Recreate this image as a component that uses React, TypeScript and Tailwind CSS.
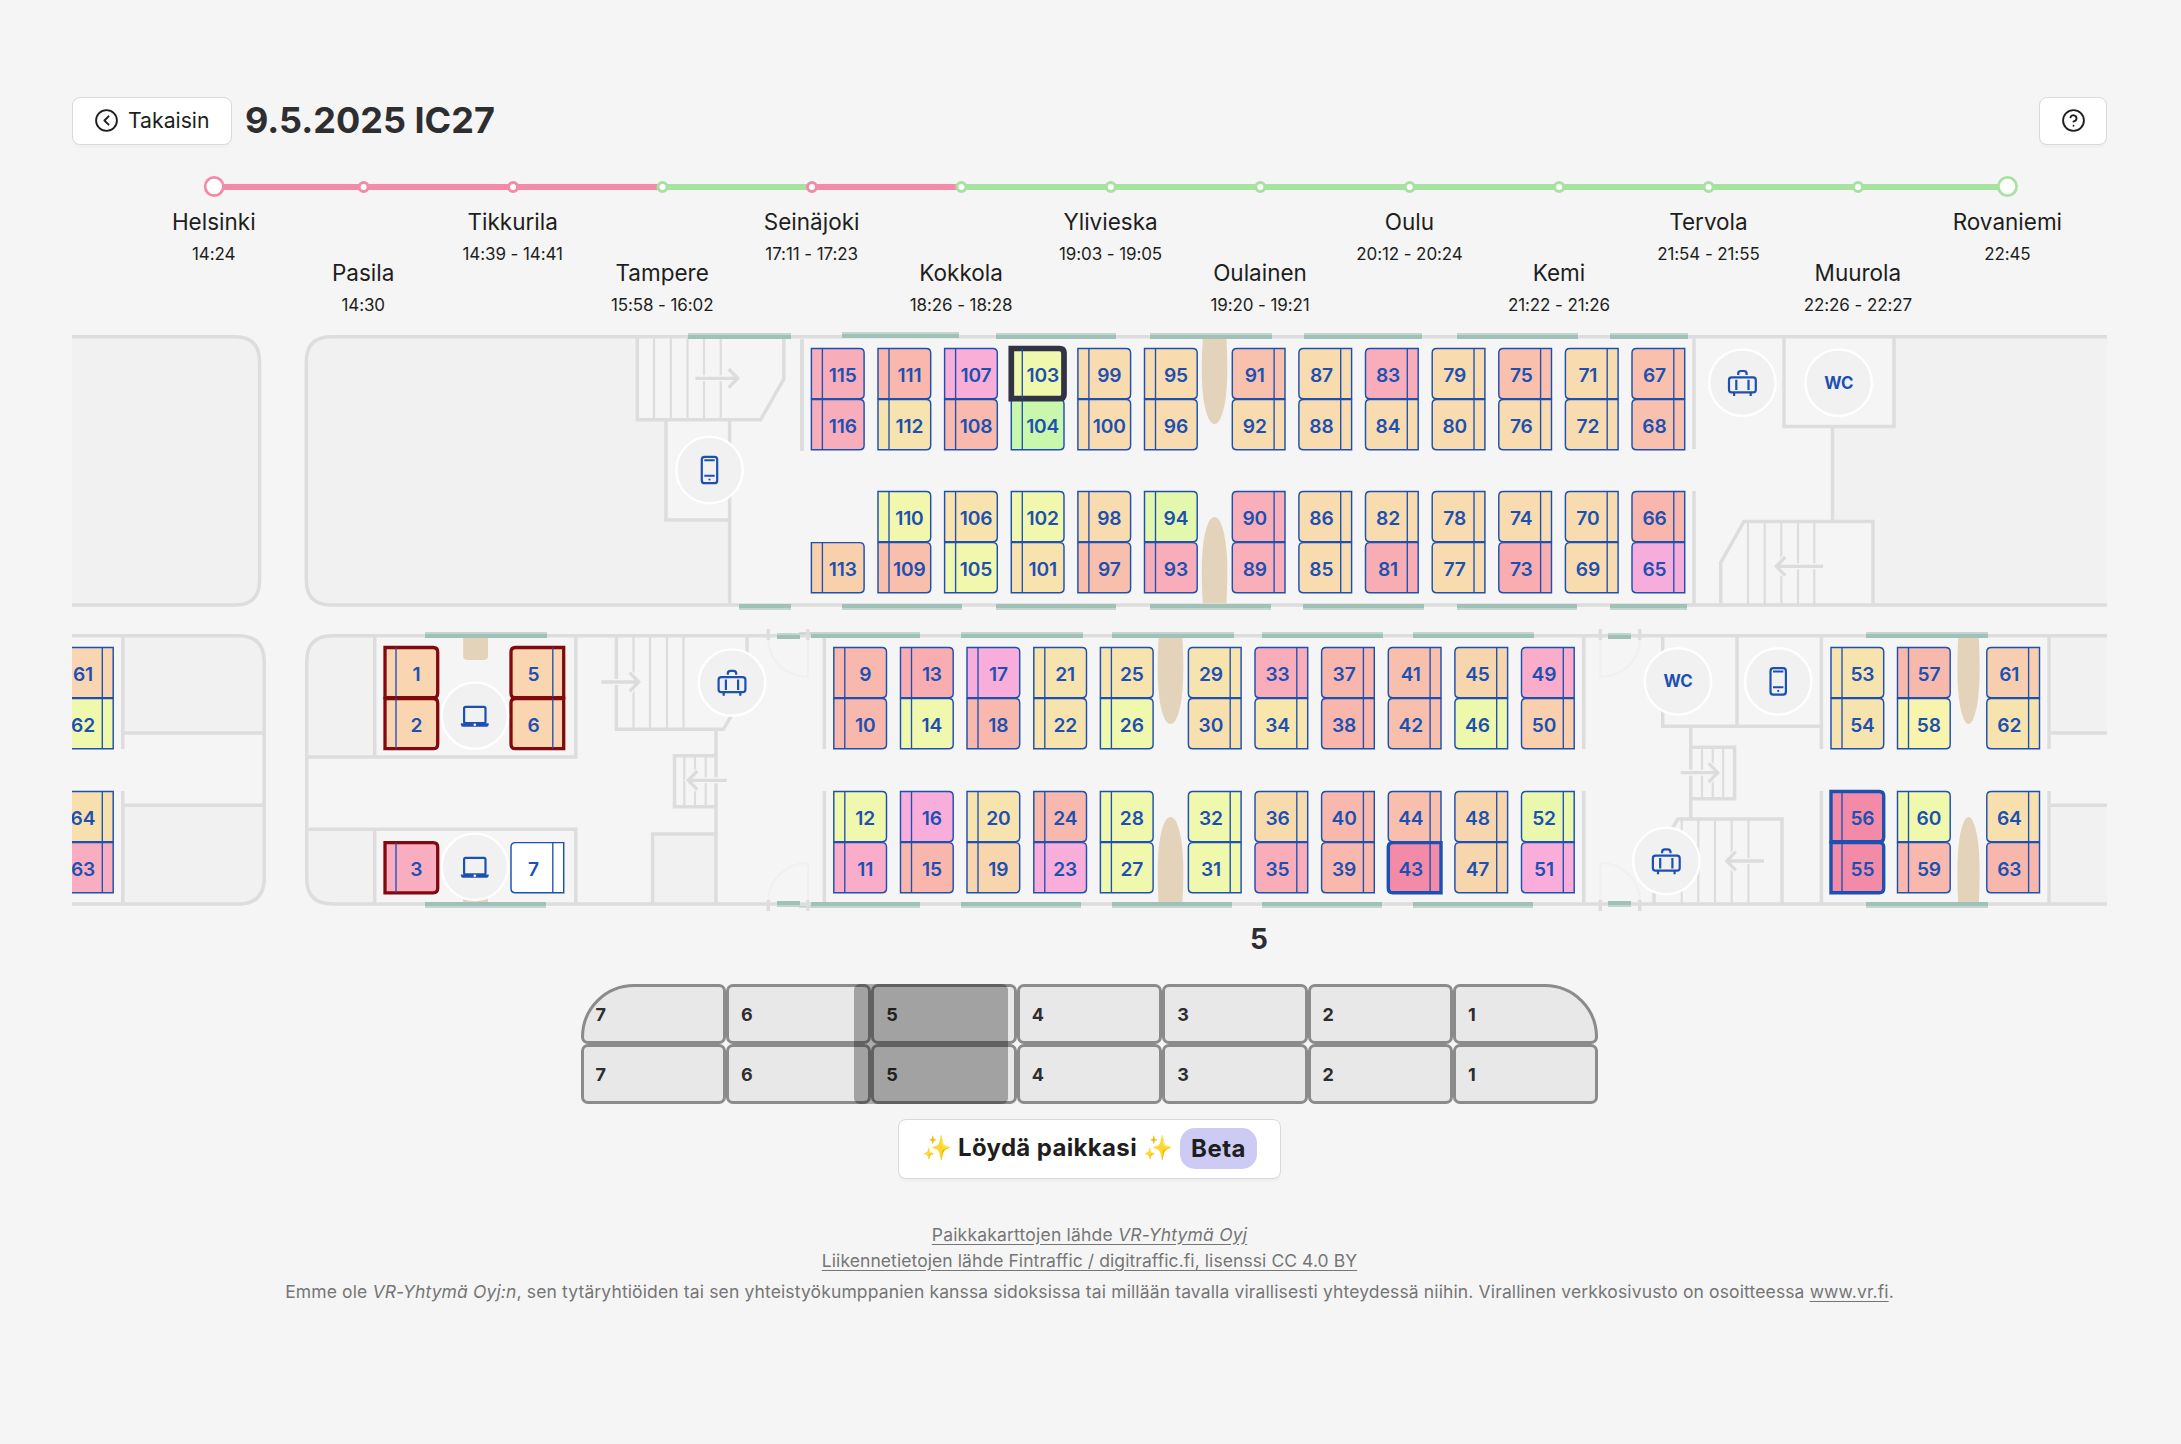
import React from "react";
import { CircleChevronLeft, CircleHelp } from "lucide-react";

const BLUE = "#1c50b1";
const WALL = "#dddddd";
const SHADE = "#f1f1f1";
const PAGE = "#f5f5f5";
const PINK = "#f38ba8";
const GREEN = "#a6e3a1";

type Stop = { name: string; time: string; next: string };

const stops: Stop[] = [
  { name: "Helsinki", time: "14:24", next: PINK },
  { name: "Pasila", time: "14:30", next: PINK },
  { name: "Tikkurila", time: "14:39 - 14:41", next: PINK },
  { name: "Tampere", time: "15:58 - 16:02", next: GREEN },
  { name: "Seinäjoki", time: "17:11 - 17:23", next: PINK },
  { name: "Kokkola", time: "18:26 - 18:28", next: GREEN },
  { name: "Ylivieska", time: "19:03 - 19:05", next: GREEN },
  { name: "Oulainen", time: "19:20 - 19:21", next: GREEN },
  { name: "Oulu", time: "20:12 - 20:24", next: GREEN },
  { name: "Kemi", time: "21:22 - 21:26", next: GREEN },
  { name: "Tervola", time: "21:54 - 21:55", next: GREEN },
  { name: "Muurola", time: "22:26 - 22:27", next: GREEN },
  { name: "Rovaniemi", time: "22:45", next: GREEN },
];

function Timeline() {
  const step = 149.44;
  const first = 75.2;
  return (
    <svg className="block h-[24px] w-[1943px]" viewBox="0 0 1943 24">
      {stops.slice(0, -1).map((s, i) => (
        <line key={s.name} x1={first + i * step} x2={first + (i + 1) * step} y1={13} y2={13} stroke={s.next} strokeWidth={6} />
      ))}
      {stops.map((s, i) => {
        const end = i === 0 || i === stops.length - 1;
        return (
          <circle key={s.name} cx={first + i * step} cy={end ? 12.5 : 13} r={end ? 9.1 : 4.5} fill="#fff" stroke={s.next} strokeWidth={end ? 2.7 : 3} />
        );
      })}
    </svg>
  );
}

type Seat = [n: number, fill: string];
type Column = { x: number; back: "l" | "r"; seats: (Seat | null)[] };

const upperRows = [348.5, 399.5, 491.5, 542.6];
const lowerRows = [647.5, 698.5, 791.5, 842.6];

const upper: Column[] = [
  { x: 811.4, back: "l", seats: [[115, "#f8adbb"], [116, "#f8adbb"], null, [113, "#f9d0ac"]] },
  { x: 878, back: "l", seats: [[111, "#f9b7ad"], [112, "#f7e3ad"], [110, "#f1f7ad"], [109, "#f8bfad"]] },
  { x: 944.6, back: "l", seats: [[107, "#f9aed8"], [108, "#f9b9ac"], [106, "#f8e2ae"], [105, "#f1f7ad"]] },
  { x: 1011.3, back: "l", seats: [[103, "#eff8ad"], [104, "#c9f8ad"], [102, "#f1f7ad"], [101, "#f8e2ae"]] },
  { x: 1077.9, back: "l", seats: [[99, "#f8dbae"], [100, "#f8dbae"], [98, "#f8dbae"], [97, "#f8c0ac"]] },
  { x: 1144.5, back: "l", seats: [[95, "#f8dbae"], [96, "#f8dbae"], [94, "#e4f8ad"], [93, "#f9adba"]] },
  { x: 1232.3, back: "r", seats: [[91, "#f8c1ad"], [92, "#f8dbae"], [90, "#f9afba"], [89, "#f9afba"]] },
  { x: 1298.9, back: "r", seats: [[87, "#f8dbae"], [88, "#f8dbae"], [86, "#f8dbae"], [85, "#f8dbae"]] },
  { x: 1365.5, back: "r", seats: [[83, "#f9adba"], [84, "#f8dbae"], [82, "#f8dbae"], [81, "#f8adb5"]] },
  { x: 1432.2, back: "r", seats: [[79, "#f8dbae"], [80, "#f8dbae"], [78, "#f8dbae"], [77, "#f8dbae"]] },
  { x: 1498.8, back: "r", seats: [[75, "#f8c0ad"], [76, "#f8dbae"], [74, "#f8dbae"], [73, "#f9adb0"]] },
  { x: 1565.4, back: "r", seats: [[71, "#f8dbae"], [72, "#f8dbae"], [70, "#f8dbae"], [69, "#f8dbae"]] },
  { x: 1632, back: "r", seats: [[67, "#f8c0ad"], [68, "#f8c0ad"], [66, "#f8b6ad"], [65, "#f7addb"]] },
];

const lower: Column[] = [
  { x: 60.5, back: "r", seats: [[61, "#f9d5b1"], [62, "#f0f8ad"], [64, "#f7e0ad"], [63, "#f9adc0"]] },
  { x: 385, back: "l", seats: [[1, "#f9d5b1"], [2, "#f9d5b1"], null, [3, "#f8adc0"]] },
  { x: 511, back: "r", seats: [[5, "#f9d5b1"], [6, "#f9d5b1"], null, [7, "#ffffff"]] },
  { x: 833.8, back: "l", seats: [[9, "#f9b8ad"], [10, "#f9b8ad"], [12, "#f0f8ad"], [11, "#f9adcb"]] },
  { x: 900.5, back: "l", seats: [[13, "#f9adb0"], [14, "#f0f8ad"], [16, "#f8addb"], [15, "#f9b6ad"]] },
  { x: 967, back: "l", seats: [[17, "#f8addb"], [18, "#f9b8ad"], [20, "#f7e3ad"], [19, "#f8d5ad"]] },
  { x: 1033.8, back: "l", seats: [[21, "#f7e3ad"], [22, "#f7e3ad"], [24, "#f8b8ad"], [23, "#f8addb"]] },
  { x: 1100.4, back: "l", seats: [[25, "#f7e3ad"], [26, "#f0f8ad"], [28, "#f0f8ad"], [27, "#f0f8ad"]] },
  { x: 1188.4, back: "r", seats: [[29, "#f7e3ad"], [30, "#f7e0ae"], [32, "#f0f8ad"], [31, "#f0f8ad"]] },
  { x: 1255, back: "r", seats: [[33, "#f9adba"], [34, "#f9e6ad"], [36, "#f8dbad"], [35, "#f9adb8"]] },
  { x: 1321.6, back: "r", seats: [[37, "#f8b6ad"], [38, "#f8b6ad"], [40, "#f9b8ad"], [39, "#f9b8ad"]] },
  { x: 1388.3, back: "r", seats: [[41, "#f8bfad"], [42, "#f8bfad"], [44, "#f8bfad"], [43, "#f38ba8"]] },
  { x: 1454.9, back: "r", seats: [[45, "#f8d6ad"], [46, "#eef8ad"], [48, "#f8d6ad"], [47, "#f8d6ad"]] },
  { x: 1521.5, back: "r", seats: [[49, "#f9adcb"], [50, "#f9cfad"], [52, "#e9f8ad"], [51, "#f9addb"]] },
  { x: 1831, back: "l", seats: [[53, "#f7e3ad"], [54, "#f7e3ad"], [56, "#f38ba8"], [55, "#f38ba8"]] },
  { x: 1897.5, back: "l", seats: [[57, "#f8b9ad"], [58, "#f8f3ad"], [60, "#f0f8ad"], [59, "#f8b8ad"]] },
  { x: 1986.8, back: "r", seats: [[61, "#f8ceb0"], [62, "#f7e3ad"], [64, "#f7e0ad"], [63, "#f8b7ad"]] },
];

const emphasis: Record<number, [color: string, width: number]> = {
  103: ["#313244", 5.7],
  43: [BLUE, 3.4],
  55: [BLUE, 3.4],
  56: [BLUE, 3.4],
  1: ["#820a0e", 3.3],
  2: ["#820a0e", 3.3],
  3: ["#820a0e", 3.3],
  5: ["#820a0e", 3.3],
  6: ["#820a0e", 3.3],
};

function SeatBox({ x, y, back, seat }: { x: number; y: number; back: "l" | "r"; seat: Seat }) {
  const [n, fill] = seat;
  const [stroke, sw] = emphasis[n] ?? [BLUE, 1.45];
  const w = 52.7;
  const h = 50.2;
  const r = 4.5;
  const d =
    back === "l"
      ? `M${x} ${y}h${w - r}q${r} 0 ${r} ${r}v${h - 2 * r}q0 ${r} ${-r} ${r}h${r - w}z`
      : `M${x + w} ${y}h${r - w}q${-r} 0 ${-r} ${r}v${h - 2 * r}q0 ${r} ${r} ${r}h${w - r}z`;
  const lx = back === "l" ? x + 11 : x + 41.8;
  return (
    <g>
      <path d={d} fill={fill} stroke={stroke} strokeWidth={sw} />
      <line x1={lx} x2={lx} y1={y} y2={y + h} stroke={BLUE} strokeWidth={1.35} />
      <text x={back === "l" ? x + 31.4 : x + 22.5} y={y + 33.2} textAnchor="middle" fontSize={19.2} fontWeight={600} letterSpacing={-0.15} fill={BLUE}>
        {n}
      </text>
    </g>
  );
}

function Seats({ columns, rows }: { columns: Column[]; rows: number[] }) {
  const all = columns.flatMap((c) =>
    c.seats.flatMap((s, i) => (s ? [{ x: c.x, y: rows[i], back: c.back, seat: s }] : []))
  );
  const strong = (s: { seat: Seat }) => (emphasis[s.seat[0]] ? 1 : 0);
  return (
    <>
      {all
        .sort((a, b) => strong(a) - strong(b))
        .map((s) => (
          <SeatBox key={`${s.x}-${s.seat[0]}`} {...s} />
        ))}
    </>
  );
}

function Windows({ spans, y, side }: { spans: [number, number][]; y: number; side: "top" | "bottom" }) {
  return (
    <>
      {spans.map(([a, b]) => (
        <g key={a}>
          <rect x={a} y={y} width={b - a} height={6} fill="#c3d5d0" />
          <rect x={a} y={side === "top" ? y + 2 : y} width={b - a} height={4} fill="#9fc1b7" />
        </g>
      ))}
    </>
  );
}

function Arrow({ tail, tip, y }: { tail: number; tip: number; y: number }) {
  const s = tip > tail ? -1 : 1;
  const end = tip + s * 2.3;
  const d = `M${tail} ${y}H${end}M${end + s * 9} ${y - 9.3}L${end} ${y}L${end + s * 9} ${y + 9.3}`;
  return (
    <g fill="none">
      <path d={d} stroke={PAGE} strokeWidth={6} />
      <path d={d} stroke="#dcdcdc" strokeWidth={3.3} />
    </g>
  );
}

function Badge({ x, y, kind }: { x: number; y: number; kind: "phone" | "bag" | "wc" | "laptop" }) {
  return (
    <g transform={`translate(${x} ${y})`} fill="none" stroke={BLUE} strokeWidth={2.2}>
      <circle r={33.2} fill={SHADE} stroke="#fff" strokeWidth={2.4} />
      {kind === "phone" && (
        <>
          <rect x={-7.7} y={-13.2} width={15.4} height={26.4} rx={2.8} />
          <path d="M-5.2 -9.8H5.2M-5.2 5.8H5.2" strokeWidth={2} />
          <circle cx={0} cy={9.5} r={1.1} fill={BLUE} stroke="none" />
        </>
      )}
      {kind === "bag" && (
        <>
          <rect x={-13.4} y={-5.4} width={26.8} height={15} rx={2.6} />
          <path d="M-6.1 -3V7.4M6.1 -3V7.4" />
          <path d="M-4.2 -7.8v-1.3q0 -2.6 2.6 -2.6h3.2q2.6 0 2.6 2.6v1.3" />
          <path d="M-8.3 9.8v3.4M8.3 9.8v3.4" />
        </>
      )}
      {kind === "laptop" && (
        <>
          <rect x={-10.7} y={-8.9} width={21.4} height={16.4} rx={1.6} />
          <path d="M-13.9 7.6h27.8v1.2q0 2.2 -2.2 2.2h-23.4q-2.2 0 -2.2 -2.2z" fill={BLUE} stroke="none" />
          <circle cx={0} cy={9} r={1.3} fill="#fff" stroke="none" />
        </>
      )}
      {kind === "wc" && (
        <text y={6} textAnchor="middle" fontSize={16.8} fontWeight={700} letterSpacing={-0.3} fill={BLUE} stroke="none">
          WC
        </text>
      )}
    </g>
  );
}

function SeatMap() {
  const treads = (xs: number[], y1: number, y2: number) => xs.map((x) => `M${x} ${y1}V${y2}`).join("");
  return (
    <svg className="block h-[590px] w-[2035px]" viewBox="72 325 2035 590" fontFamily="Inter, sans-serif">
      {/* shaded equipment areas */}
      <g fill={SHADE}>
        <path d="M72 336.6H235Q259.6 336.6 259.6 362V580Q259.6 605 235 605H72z" />
        <path d="M331 336.6H637V420H666V520H730V605H331Q306.3 605 306.3 580V362Q306.3 336.6 331 336.6z" />
        <path d="M1894 337H2107V605H1873V521H1832.5V426H1894z" />
        <path d="M123 636H238Q264 636 264 662V733H123zM123 805H264V878Q264 904 238 904H123z" />
        <path d="M332 636H374.7V757H306.7V662Q306.7 636 332 636zM306.7 829H374.7V904H332Q306.7 904 306.7 878z" />
        <path d="M652.6 834H716V904H652.6zM2049 636H2107V733H2049zM2049 805H2107V904H2049z" />
      </g>

      {/* door swings */}
      <g fill="none" stroke="#f0f0f0" strokeWidth={2}>
        <path d="M768.3 640A39.5 38 0 0 0 808 677V640M768.3 901A39.5 38 0 0 1 808 863V901" />
        <path d="M1640 640A39.5 38 0 0 1 1600.3 677V640M1640 901A39.5 38 0 0 0 1600.3 863V901" />
      </g>

      {/* stair treads */}
      <g fill="none" stroke={WALL} strokeWidth={2.2}>
        <path d={treads([654, 670.8, 687.5, 704, 720.7], 338, 419)} />
        <path d={treads([1748, 1764.7, 1781.3, 1798, 1814.3], 521, 604)} />
        <path d={treads([633.5, 650, 667, 683.5], 637, 729)} />
        <path d={treads([684.3, 695, 705.7], 757, 806)} />
        <path d={treads([1702, 1712.7, 1723.2], 747, 799)} />
        <path d={treads([1681.7, 1698.3, 1715, 1731.7, 1748.4], 819, 903)} />
      </g>

      {/* walls */}
      <g fill="none" stroke={WALL} strokeWidth={3.5}>
        <path d="M72 336.7H235Q259.6 336.7 259.6 362V580Q259.6 605 235 605H72" />
        <path d="M2107 336.7H331Q306.3 336.7 306.3 362V580Q306.3 605 331 605H2107" />
        <path d="M637.3 337V419.7H760.6L783.8 379V337" />
        <path d="M666 420V520H729.6M729.6 420V605" />
        <path d="M802 339V451" strokeWidth={4} />
        <path d="M1694 338V449M1694 491V604" />
        <path d="M1784 337V426.5H1894V337M1832.5 426.5V521" />
        <path d="M1720.7 605V562.7L1744 521.4H1873V605" />
        <path d="M72 635.7H238Q264.2 635.7 264.2 662V878Q264.2 904 238 904H72" />
        <path d="M2107 635.7H332Q306.7 635.7 306.7 662V878Q306.7 904 332 904H2107" />
        <path d="M122.8 637V749M122.8 791V904M124 733H264M124 805.3H264" />
        <path d="M374.7 636V757M374.7 829V904M307 757H575.8V636M307 829.3H575.8V904" />
        <path d="M616.4 636V729.3H723.4L747 689V636" />
        <path d="M716 729V904M716 755.7H674.5V806.7H716M652.6 904V834H716" />
        <path d="M824.4 637V749M824.4 791V904M1583.7 637V749M1583.7 791V904" />
        <path d="M1662.7 636V726.3H1821.4M1737 636V726.3M1690.7 726V819" />
        <path d="M1821.4 637V749M1821.4 791V904M2049 637V749M2049 791V904" />
        <path d="M1690.7 747.3H1734.6V798.7H1690.7" />
        <path d="M1654 904V860L1677.7 819H1782V904" />
        <path d="M2051 733H2107M2051 805.3H2107" />
      </g>

      {/* tables */}
      <g fill="#e3d3ba">
        <path d="M1202.8 338.6Q1199 400 1209 419.5Q1214.6 428.5 1220 419.5Q1230 400 1226.4 338.6z" />
        <path d="M1202.8 603.4Q1199 541 1209 521.5Q1214.6 512.5 1220 521.5Q1230 541 1226.4 603.4z" />
        <path d="M1158.6 638Q1155 700 1165 719.5Q1170.5 728.5 1176 719.5Q1186 700 1182.4 638z" />
        <path d="M1158.6 902.5Q1155 841 1165 821.5Q1170.5 812.5 1176 821.5Q1186 841 1182.4 902.5z" />
        <path d="M1958.2 638Q1955 700 1964 719.5Q1968.5 728.5 1973 719.5Q1982 700 1978.8 638z" />
        <path d="M1958.2 902.5Q1955 841 1964 821.5Q1968.5 812.5 1973 821.5Q1982 841 1978.8 902.5z" />
        <path d="M463.2 638H488V656Q488 660 484 660H467.2Q463.2 660 463.2 656zM463.2 890H488V902H463.2z" />
      </g>

      <Windows side="top" y={333} spans={[[688, 791], [996, 1116], [1150, 1272], [1304, 1422], [1457, 1578], [1610, 1688]]} />
      <Windows side="top" y={332} spans={[[842, 959]]} />
      <Windows side="bottom" y={604} spans={[[739, 791], [842, 962], [996, 1116], [1150, 1271], [1303, 1424], [1457, 1577], [1610, 1687]]} />
      <Windows side="top" y={632} spans={[[425, 547], [811, 920], [961, 1083], [1112, 1234], [1262, 1383], [1413, 1534], [1866, 1988]]} />
      <Windows side="bottom" y={902} spans={[[425, 546], [811, 920], [961, 1081], [1112, 1232], [1262, 1382], [1413, 1533], [1866, 1988]]} />
      <Windows side="top" y={633} spans={[[777, 800], [1608, 1631]]} />
      <Windows side="bottom" y={901} spans={[[777, 800], [1608, 1631]]} />
      <path d="M799 633.2H811M799 906.8H811" stroke="#c3d5d0" strokeWidth={2} />
      <path d="M768.3 629V640M807.8 629V640M1600.3 629V640M1639.7 629V640M768.3 900V911M807.8 900V911M1600.3 900V911M1639.7 900V911" stroke={WALL} strokeWidth={3.3} />

      <Seats columns={upper} rows={upperRows} />
      <Seats columns={lower} rows={lowerRows} />

      <Arrow tail={695.5} tip={740} y={378.3} />
      <Arrow tail={1823} tip={1774} y={566.3} />
      <Arrow tail={601.4} tip={641} y={682} />
      <Arrow tail={726.7} tip={686} y={780.3} />
      <Arrow tail={1680.7} tip={1720} y={772.7} />
      <Arrow tail={1764} tip={1724.5} y={861} />

      <Badge kind="phone" x={709.5} y={470} />
      <Badge kind="bag" x={1742.4} y={382.7} />
      <Badge kind="wc" x={1838.6} y={382.7} />
      <Badge kind="laptop" x={474.8} y={715.7} />
      <Badge kind="laptop" x={474.8} y={866.8} />
      <Badge kind="bag" x={732} y={682.6} />
      <Badge kind="wc" x={1678} y={681.4} />
      <Badge kind="phone" x={1778.2} y={681.4} />
      <Badge kind="bag" x={1666.3} y={861} />
    </svg>
  );
}

const cars = [7, 6, 5, 4, 3, 2, 1];

function MiniMap() {
  return (
    <div className="relative mx-auto flex w-[1018px] flex-col">
      {[0, 1].map((deck) => (
        <div key={deck} className="flex">
          {cars.map((c) => (
            <div
              key={c}
              className={
                "flex h-[60px] flex-1 items-center rounded-[7px] border-[3px] border-[#8b8b8b] bg-[#e8e8e8] pl-[12px] text-[18px] font-bold text-[#2e2e30]" +
                (deck === 0 && c === 7 ? " rounded-tl-[54px]" : "") +
                (deck === 0 && c === 1 ? " rounded-tr-[54px]" : "")
              }
            >
              {c}
            </div>
          ))}
        </div>
      ))}
      <div className="absolute top-0 left-[273px] h-[120px] w-[154px] rounded-[6px] bg-black/30" />
    </div>
  );
}

export default function App() {
  return (
    <div className="min-h-[1444px] w-[2181px] overflow-hidden bg-[#f5f5f5] px-[72px] pt-[97px] font-['Inter',sans-serif] text-[#1e1e20]">
      <header className="flex h-[48px] w-[2035px] items-center justify-between">
        <div className="flex items-center gap-[13px]">
          <button className="flex h-[48px] w-[160px] items-center gap-[9px] rounded-[8px] border border-[#d9d9db] bg-white pb-[2px] pl-[21px] text-[21.2px] shadow-[0_3px_1px_rgba(0,0,0,0.025)]">
            <CircleChevronLeft size={25} strokeWidth={1.8} />
            <span className="pt-[1px]">Takaisin</span>
          </button>
          <h1 className="pb-[3px] text-[36px] leading-[44px] font-bold text-[#2e2e30]">9.5.2025 IC27</h1>
        </div>
        <button className="flex h-[48px] w-[68px] items-center justify-center rounded-[8px] border border-[#d9d9db] bg-white pb-[2px] shadow-[0_3px_1px_rgba(0,0,0,0.025)]">
          <CircleHelp size={25} strokeWidth={1.8} />
        </button>
      </header>

      <section className="mt-[29px] ml-[67px] h-[151px]">
        <Timeline />
        <div className="mt-[9px] flex w-[1943px]">
          {stops.map((s, i) => (
            <div key={s.name} className={"flex flex-1 flex-col items-center whitespace-nowrap " + (i % 2 ? "pt-[51px]" : "")}>
              <span className="text-[22.5px] leading-[30px]">{s.name}</span>
              <span className="mt-[5px] text-[17px] leading-[24px] tracking-[-0.1px]">{s.time}</span>
            </div>
          ))}
        </div>
      </section>

      <SeatMap />

      <div className="pt-[8px] pl-[1178px] text-[28px] leading-[32px] font-bold text-[#2e2e30]">5</div>

      <div className="w-[2035px] pt-[29px]">
        <MiniMap />
        <button className="mx-auto mt-[15px] flex h-[60px] w-[383px] items-center justify-center rounded-[8px] border border-[#d9d9db] bg-white pb-[2px] text-[24px] font-bold whitespace-nowrap shadow-[0_3px_1px_rgba(0,0,0,0.025)]">
          <span className="text-[24px]">✨</span>
          <span className="mx-[6px] tracking-[0.35px]">Löydä paikkasi</span>
          <span className="text-[24px]">✨</span>
          <span className="ml-[7px] rounded-[15px] bg-[#cdcbf3] px-[11px] leading-[41px] tracking-[0.5px]">Beta</span>
        </button>
      </div>

      <footer className="flex w-[2035px] flex-col items-center pt-[43px] text-[17.5px] whitespace-nowrap text-[#757575]">
        <a className="leading-[26px] tracking-[0.2px] underline underline-offset-[3px]">
          Paikkakarttojen lähde <i>VR-Yhtymä Oyj</i>
        </a>
        <a className="leading-[26px] tracking-[0.08px] underline underline-offset-[3px]">
          Liikennetietojen lähde Fintraffic / digitraffic.fi, lisenssi CC 4.0 BY
        </a>
        <p className="mt-[5px] leading-[26px] tracking-[0.135px]">
          Emme ole <i>VR-Yhtymä Oyj:n</i>, sen tytäryhtiöiden tai sen yhteistyökumppanien kanssa sidoksissa tai millään tavalla
          virallisesti yhteydessä niihin. Virallinen verkkosivusto on osoitteessa{" "}
          <a className="underline underline-offset-[3px]">www.vr.fi</a>.
        </p>
      </footer>
    </div>
  );
}
